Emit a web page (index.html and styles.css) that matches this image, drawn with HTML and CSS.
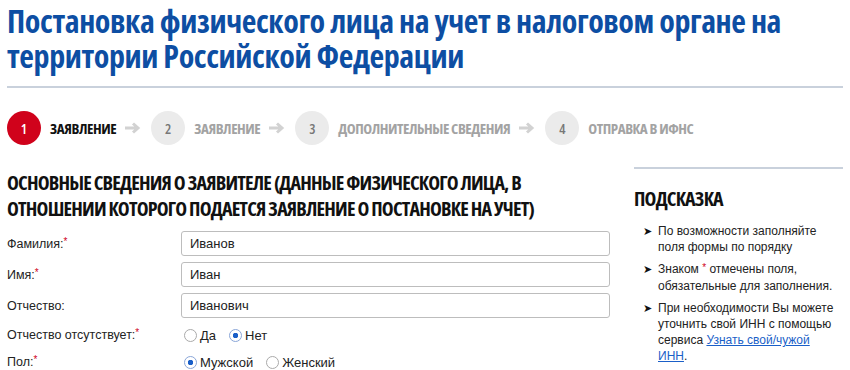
FILE: index.html
```html
<!DOCTYPE html>
<html lang="ru">
<head>
<meta charset="UTF-8">
<title>Постановка на учет</title>
<link rel="stylesheet" href="styles.css">
</head>
<body>
  <div class="page">
    <h1 class="title">Постановка физического лица на учет в налоговом органе на территории Российской Федерации</h1>

    <ol class="steps">
      <li class="step active"><span class="num">1</span><span class="label">Заявление</span></li>
      <li class="arrow"><svg width="16" height="12" viewBox="0 0 16 12"><path d="M0 6H12M8 1.5L13 6L8 10.5" fill="none" stroke="#d2d2d2" stroke-width="3"/></svg></li>
      <li class="step"><span class="num">2</span><span class="label">Заявление</span></li>
      <li class="arrow"><svg width="16" height="12" viewBox="0 0 16 12"><path d="M0 6H12M8 1.5L13 6L8 10.5" fill="none" stroke="#d2d2d2" stroke-width="3"/></svg></li>
      <li class="step"><span class="num">3</span><span class="label">Дополнительные сведения</span></li>
      <li class="arrow"><svg width="16" height="12" viewBox="0 0 16 12"><path d="M0 6H12M8 1.5L13 6L8 10.5" fill="none" stroke="#d2d2d2" stroke-width="3"/></svg></li>
      <li class="step"><span class="num">4</span><span class="label">Отправка в ИФНС</span></li>
    </ol>

    <div class="main">
      <form class="form">
        <h2 class="section">Основные сведения о заявителе (данные физического лица, в отношении которого подается заявление о постановке на учет)</h2>

        <div class="row">
          <label for="lastName">Фамилия:<sup class="req">*</sup></label>
          <input type="text" id="lastName" value="Иванов">
        </div>
        <div class="row">
          <label for="firstName">Имя:<sup class="req">*</sup></label>
          <input type="text" id="firstName" value="Иван">
        </div>
        <div class="row">
          <label for="middleName">Отчество:</label>
          <input type="text" id="middleName" value="Иванович">
        </div>
        <div class="row radio-row">
          <label>Отчество отсутствует:<sup class="req">*</sup></label>
          <div class="radios">
            <label class="radio"><input type="radio" name="noMiddle"> Да</label>
            <label class="radio"><input type="radio" name="noMiddle" checked> Нет</label>
          </div>
        </div>
        <div class="row radio-row">
          <label>Пол:<sup class="req">*</sup></label>
          <div class="radios">
            <label class="radio"><input type="radio" name="sex" checked> Мужской</label>
            <label class="radio"><input type="radio" name="sex"> Женский</label>
          </div>
        </div>
      </form>

      <aside class="hint">
        <h3>Подсказка</h3>
        <ul>
          <li>По возможности заполняйте поля формы по порядку</li>
          <li>Знаком <span class="star">*</span> отмечены поля, обязательные для заполнения.</li>
          <li>При необходимости Вы можете уточнить свой ИНН с помощью сервиса <a href="#">Узнать свой/чужой ИНН</a>.</li>
        </ul>
      </aside>
    </div>
  </div>
</body>
</html>
```

FILE: styles.css
```css
body {
  margin: 0;
  font-family: "Liberation Sans", Arial, sans-serif;
  font-size: 12.5px;
  color: #222;
  background: #fff;
}

.page {
  padding: 0 7px;
}

/* condensed headings */
.title,
.section,
.hint h3,
.label,
.num {
  font-family: "Open Sans", sans-serif;
  font-stretch: 75%;
}

.title {
  margin: 0;
  padding: 3px 0 13px;
  font-weight: 700;
  font-size: 32px;
  line-height: 35px;
  letter-spacing: -0.4px;
  color: #0d4ea3;
  border-bottom: 2px solid #c9d1dc;
}

.steps {
  display: flex;
  align-items: center;
  margin: 0;
  padding: 23px 0 0;
  list-style: none;
}

.step {
  display: flex;
  align-items: center;
  gap: 9px;
}

.num {
  display: flex;
  align-items: center;
  justify-content: center;
  width: 34px;
  height: 34px;
  border-radius: 50%;
  background: #ebebeb;
  color: #777;
  font-size: 14px;
  font-weight: 600;
}

.label {
  font-weight: 700;
  font-size: 15px;
  letter-spacing: -0.45px;
  text-transform: uppercase;
  color: #a3a3a3;
}

.step.active .num {
  background: #d0021b;
  color: #fff;
}

.step.active .label {
  color: #111;
}

.arrow {
  display: flex;
  margin: 0 10px 0 9px;
}

.main {
  display: grid;
  grid-template-columns: 1fr 209px;
  gap: 24px;
  margin-top: 22px;
}

.section {
  max-width: 540px;
  margin: 3px 0 9px;
  font-weight: 700;
  font-size: 20px;
  line-height: 26px;
  letter-spacing: -0.8px;
  text-transform: uppercase;
  color: #111;
}

.row {
  display: grid;
  grid-template-columns: 174px 1fr;
  align-items: center;
  margin-bottom: 6px;
}

.row > label {
  color: #222;
}

.req {
  color: #d0021b;
  font-size: 10px;
  vertical-align: 3px;
  line-height: 0;
}

.row input[type="text"] {
  height: 25px;
  box-sizing: border-box;
  padding: 0 8px;
  border: 1px solid #bdbdbd;
  border-radius: 3px;
  font-family: "Liberation Sans", Arial, sans-serif;
  font-size: 13px;
  color: #222;
}

.radio-row {
  height: 22px;
  margin-bottom: 5px;
}

.radios {
  display: flex;
  gap: 13px;
  padding-left: 3px;
}

.radio {
  display: flex;
  align-items: center;
  gap: 3px;
  font-size: 13px;
}

.radio input {
  appearance: none;
  width: 13px;
  height: 13px;
  margin: 0;
  border: 1px solid #aaa;
  border-radius: 50%;
  background: #fff;
}

.radio input:checked {
  background: radial-gradient(circle, #1a5fc8 0 2.5px, #fff 3px);
  border-color: #8aa6d8;
}

.hint {
  border-top: 2px solid #c9d1dc;
}

.hint h3 {
  margin: 17px 0 11px;
  font-weight: 700;
  font-size: 20px;
  line-height: 26px;
  letter-spacing: -0.8px;
  text-transform: uppercase;
  color: #111;
}

.hint ul {
  margin: 0;
  padding: 0;
  list-style: none;
}

.hint li {
  position: relative;
  margin-bottom: 6px;
  padding: 0 3px 0 24px;
  font-size: 12px;
  line-height: 16px;
  color: #222;
}

.hint li::before {
  content: "\27A4";
  position: absolute;
  left: 9px;
  top: 0;
  font-size: 11px;
  color: #111;
}

.hint .star {
  color: #d0021b;
  font-size: 10px;
  position: relative;
  top: -2px;
}

.hint a {
  color: #1a5fc8;
}
```
